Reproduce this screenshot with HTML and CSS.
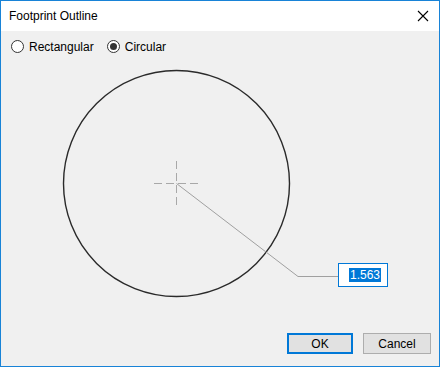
FILE: index.html
```html
<!DOCTYPE html>
<html lang="en">
<head>
  <meta charset="UTF-8">
  <title>Footprint Outline</title>
  <link rel="stylesheet" href="styles.css">
</head>
<body>
  <div class="window">
    <div class="titlebar">
      <span class="title">Footprint Outline</span>
      <svg class="close" width="12" height="12" viewBox="0 0 12 12">
        <path d="M1 1 L11 11 M11 1 L1 11" stroke="#000" stroke-width="1.1"/>
      </svg>
    </div>

    <div class="content">
      <div class="options">
        <label class="radio"><span class="dot"></span>Rectangular</label>
        <label class="radio checked"><span class="dot"></span>Circular</label>
      </div>

      <div class="canvas">
        <svg width="438" height="267" viewBox="0 0 438 267">
          <!-- crosshair -->
          <g stroke="#a8a8a8" stroke-width="1" stroke-dasharray="8 4">
            <line x1="153" y1="123.5" x2="197" y2="123.5"/>
            <line x1="175.5" y1="101" x2="175.5" y2="146"/>
          </g>
          <!-- outline -->
          <circle cx="175.5" cy="123.5" r="113" fill="none" stroke="#2a2a2a" stroke-width="1.4"/>
          <!-- radius leader -->
          <polyline points="175.5,123.5 297,216.5 337,216.5" fill="none" stroke="#a0a0a0" stroke-width="1"/>
        </svg>
        <div class="value"><span class="sel">1.563</span></div>
      </div>

      <div class="buttons">
        <button class="btn default">OK</button>
        <button class="btn">Cancel</button>
      </div>
    </div>
  </div>
</body>
</html>
```

FILE: styles.css
```css
* {
  box-sizing: border-box;
}
body {
  margin: 0;
  font-family: "Liberation Sans", Arial, sans-serif;
  font-size: 12px;
  color: #000;
}
.window {
  width: 440px;
  height: 367px;
  border: 1px solid #1883d7;
  display: flex;
  flex-direction: column;
  background: #f0f0f0;
}
.titlebar {
  height: 30px;
  background: #fff;
  display: flex;
  align-items: center;
  justify-content: space-between;
  padding: 0 10px 0 8px;
}
.title {
  font-size: 12px;
  padding-bottom: 1px;
}
.close {
  margin-top: -1px;
}
.content {
  flex: 1;
  display: flex;
  flex-direction: column;
}
.options {
  height: 29px;
  display: flex;
  align-items: center;
  padding-left: 10px;
  gap: 13px;
}
.radio {
  display: flex;
  align-items: center;
  gap: 5px;
  padding-top: 2px;
}
.dot {
  width: 13px;
  height: 13px;
  border: 1px solid #333;
  border-radius: 50%;
  background: #fff;
  display: flex;
  align-items: center;
  justify-content: center;
}
.checked .dot::after {
  content: '';
  width: 7px;
  height: 7px;
  border-radius: 50%;
  background: #333;
}
.canvas {
  position: relative;
  height: 267px;
}
.canvas svg {
  display: block;
}
.value {
  position: absolute;
  left: 337px;
  top: 203px;
  width: 50px;
  height: 24px;
  border: 1px solid #0078d7;
  background: #fff;
  display: flex;
  align-items: center;
  padding-left: 10px;
}
.sel {
  background: #0078d7;
  color: #fff;
  line-height: 14px;
  padding: 0 1px;
}
.buttons {
  flex: 1;
  display: flex;
  justify-content: flex-end;
  align-items: flex-start;
  gap: 10px;
  padding: 6px 8px 0 0;
}
.btn {
  width: 68px;
  height: 21px;
  font-family: "Liberation Sans", Arial, sans-serif;
  font-size: 12px;
  background: #e1e1e1;
  border: 1px solid #adadad;
  padding: 0;
  color: #000;
}
.btn.default {
  width: 66px;
  border: 2px solid #0078d7;
}
```
